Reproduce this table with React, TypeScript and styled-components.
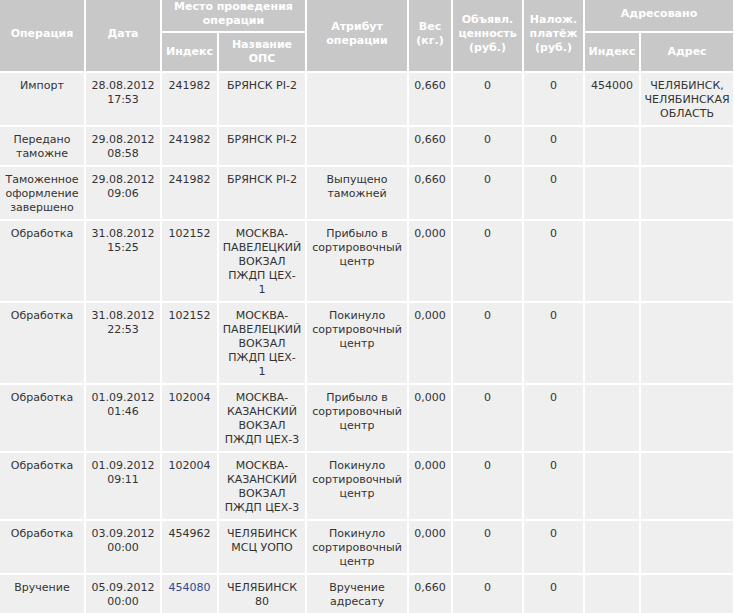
import React from 'react';
import styled, { createGlobalStyle } from 'styled-components';

const Global = createGlobalStyle`
  html, body { margin: 0; padding: 0; background: #ffffff; overflow: hidden; }
  body { font-family: "DejaVu Sans", Verdana, sans-serif; font-size: 11px; }
`;

const Table = styled.table`
  width: 735px;
  margin-top: -3px;
  table-layout: fixed;
  border-collapse: separate;
  border-spacing: 0;
  font-family: "DejaVu Sans", Verdana, sans-serif;
  font-size: 11px;
  line-height: 14px;
`;

const Col = styled.col<{ $w: number }>`
  width: ${(p) => p.$w}px;
`;

const Th = styled.th<{ $pad?: string }>`
  background: #c8c8c8;
  color: #ffffff;
  font-weight: bold;
  text-align: center;
  vertical-align: middle;
  border-right: 2px solid #ffffff;
  border-bottom: 2px solid #ffffff;
  padding: ${(p) => p.$pad ?? '3px 1px'};
  white-space: nowrap;
`;

const Td = styled.td`
  background: #efefef;
  color: #333333;
  text-align: center;
  vertical-align: top;
  border-right: 2px solid #ffffff;
  border-bottom: 2px solid #ffffff;
  padding: 6px 1px 4px;
  white-space: nowrap;
`;

const IndexLink = styled.a`
  color: #2a4c96;
  text-decoration: none;
`;

const Lines: React.FC<{ text: string }> = ({ text }) => (
  <>
    {text.split('\n').map((l, i, arr) => (
      <React.Fragment key={i}>
        {l}
        {i < arr.length - 1 && <br />}
      </React.Fragment>
    ))}
  </>
);

type Row = {
  op: string;
  date: string;
  idx: string;
  link?: boolean;
  name: string;
  attr: string;
  weight: string;
  value: string;
  cod: string;
  toIdx: string;
  toAddr: string;
};

const PAV = 'МОСКВА-\nПАВЕЛЕЦКИЙ\nВОКЗАЛ\nПЖДП ЦЕХ-\n1';
const KAZ = 'МОСКВА-\nКАЗАНСКИЙ\nВОКЗАЛ\nПЖДП ЦЕХ-3';
const IN = 'Прибыло в\nсортировочный\nцентр';
const OUT = 'Покинуло\nсортировочный\nцентр';

const rows: Row[] = [
  { op: 'Импорт', date: '28.08.2012\n17:53', idx: '241982', name: 'БРЯНСК PI-2', attr: '', weight: '0,660', value: '0', cod: '0', toIdx: '454000', toAddr: 'ЧЕЛЯБИНСК,\nЧЕЛЯБИНСКАЯ\nОБЛАСТЬ' },
  { op: 'Передано\nтаможне', date: '29.08.2012\n08:58', idx: '241982', name: 'БРЯНСК PI-2', attr: '', weight: '0,660', value: '0', cod: '0', toIdx: '', toAddr: '' },
  { op: 'Таможенное\nоформление\nзавершено', date: '29.08.2012\n09:06', idx: '241982', name: 'БРЯНСК PI-2', attr: 'Выпущено\nтаможней', weight: '0,660', value: '0', cod: '0', toIdx: '', toAddr: '' },
  { op: 'Обработка', date: '31.08.2012\n15:25', idx: '102152', name: PAV, attr: IN, weight: '0,000', value: '0', cod: '0', toIdx: '', toAddr: '' },
  { op: 'Обработка', date: '31.08.2012\n22:53', idx: '102152', name: PAV, attr: OUT, weight: '0,000', value: '0', cod: '0', toIdx: '', toAddr: '' },
  { op: 'Обработка', date: '01.09.2012\n01:46', idx: '102004', name: KAZ, attr: IN, weight: '0,000', value: '0', cod: '0', toIdx: '', toAddr: '' },
  { op: 'Обработка', date: '01.09.2012\n09:11', idx: '102004', name: KAZ, attr: OUT, weight: '0,000', value: '0', cod: '0', toIdx: '', toAddr: '' },
  { op: 'Обработка', date: '03.09.2012\n00:00', idx: '454962', name: 'ЧЕЛЯБИНСК\nМСЦ УОПО', attr: OUT, weight: '0,000', value: '0', cod: '0', toIdx: '', toAddr: '' },
  { op: 'Вручение', date: '05.09.2012\n00:00', idx: '454080', link: true, name: 'ЧЕЛЯБИНСК\n80', attr: 'Вручение\nадресату', weight: '0,660', value: '0', cod: '0', toIdx: '', toAddr: '' },
];

const widths = [86, 76, 57, 88, 102, 44, 71, 61, 56, 94];

export default function App() {
  return (
    <>
      <Global />
      <Table>
        <colgroup>
          {widths.map((w, i) => (
            <Col key={i} $w={w} />
          ))}
        </colgroup>
        <thead>
          <tr>
            <Th rowSpan={2}>Операция</Th>
            <Th rowSpan={2}>Дата</Th>
            <Th colSpan={2}>
              <Lines text={'Место проведения\nоперации'} />
            </Th>
            <Th rowSpan={2}>
              <Lines text={'Атрибут\nоперации'} />
            </Th>
            <Th rowSpan={2}>
              <Lines text={'Вес\n(кг.)'} />
            </Th>
            <Th rowSpan={2}>
              <Lines text={'Объявл.\nценность\n(руб.)'} />
            </Th>
            <Th rowSpan={2}>
              <Lines text={'Налож.\nплатёж\n(руб.)'} />
            </Th>
            <Th colSpan={2}>Адресовано</Th>
          </tr>
          <tr>
            <Th $pad="5px 1px">Индекс</Th>
            <Th $pad="5px 1px">
              <Lines text={'Название\nОПС'} />
            </Th>
            <Th $pad="5px 1px">Индекс</Th>
            <Th $pad="5px 1px">Адрес</Th>
          </tr>
        </thead>
        <tbody>
          {rows.map((r, i) => (
            <tr key={i}>
              <Td><Lines text={r.op} /></Td>
              <Td><Lines text={r.date} /></Td>
              <Td>{r.link ? <IndexLink href="#">{r.idx}</IndexLink> : r.idx}</Td>
              <Td><Lines text={r.name} /></Td>
              <Td><Lines text={r.attr} /></Td>
              <Td>{r.weight}</Td>
              <Td>{r.value}</Td>
              <Td>{r.cod}</Td>
              <Td>{r.toIdx}</Td>
              <Td><Lines text={r.toAddr} /></Td>
            </tr>
          ))}
        </tbody>
      </Table>
    </>
  );
}
